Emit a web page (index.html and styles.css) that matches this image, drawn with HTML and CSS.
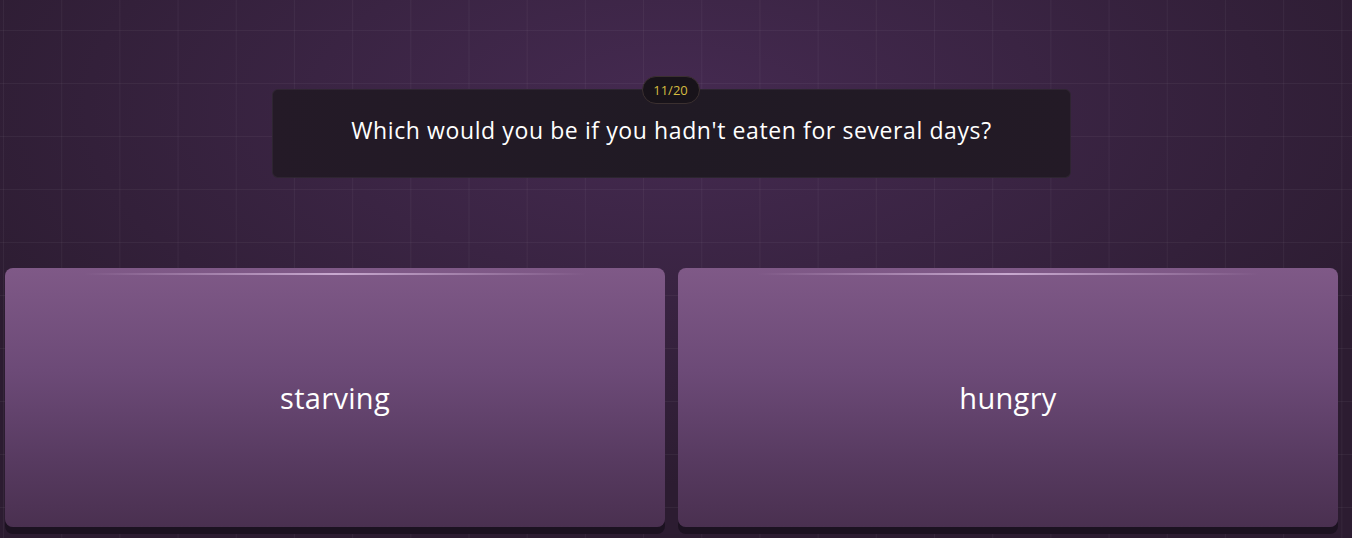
FILE: index.html
```html
<!DOCTYPE html>
<html lang="en">
<head>
<meta charset="UTF-8">
<meta name="viewport" content="width=device-width, initial-scale=1.0">
<title>Quiz</title>
<link rel="stylesheet" href="styles.css">
</head>
<body>

<div class="stage">
    <!-- Pertanyaan -->
    <div class="question-wrap">
        <div class="question">
            <span class="counter">11/20</span>
            <p class="question-text">Which would you be if you hadn't eaten for several days?</p>
        </div>
    </div>

    <!-- Pilihan jawaban -->
    <div class="answers">
        <button class="answer">starving</button>
        <button class="answer">hungry</button>
    </div>
</div>

</body>
</html>
```

FILE: styles.css
```css
/* Latar belakang dengan grid tipis */
html, body {
    margin: 0;
    height: 100%;
}
body {
    font-family: "Open Sans", "Noto Sans", sans-serif;
    color: #fff;
    overflow: hidden;
    background-color: #33213a;
    background-image:
        linear-gradient(rgba(255, 255, 255, 0.045) 1px, transparent 1px),
        linear-gradient(90deg, rgba(255, 255, 255, 0.045) 1px, transparent 1px),
        radial-gradient(ellipse 60% 70% at 50% 20%, #452a51 0%, #3a2443 45%, #2c1c31 100%);
    background-size: 58.2px 53px, 58.2px 53px, 100% 100%;
    background-position: 3px 30px, 3px 30px, 0 0;
}
.stage {
    height: 538px;
    padding: 89px 14px 0 5px;
    box-sizing: border-box;
    display: flex;
    flex-direction: column;
}
.question-wrap {
    display: flex;
    justify-content: center;
}
.question {
    position: relative;
    width: 799px;
    height: 89px;
    box-sizing: border-box;
    background: linear-gradient(90deg, #241a27, #201a24 50%, #231a26);
    border: 1px solid rgba(255, 255, 255, 0.05);
    border-radius: 6px;
    text-align: center;
}
.counter {
    position: absolute;
    top: -14px;
    left: 50%;
    transform: translateX(-50%);
    margin-left: -1px;
    width: 58px;
    height: 28px;
    box-sizing: border-box;
    line-height: 26px;
    font-size: 13px;
    color: #d6bb40;
    background: #18131a;
    border: 1px solid #3b3030;
    border-radius: 14px;
}
.question-text {
    margin: 0;
    padding-top: 25px;
    font-size: 23px;
    line-height: 30px;
    letter-spacing: 0.6px;
}
.answers {
    margin-top: 90px;
    display: grid;
    grid-template-columns: 1fr 1fr;
    gap: 13px;
}
.answer {
    position: relative;
    height: 259px;
    border: none;
    border-radius: 8px;
    background: linear-gradient(180deg, #7f5987 0%, #6c4a77 40%, #573a60 75%, #4a3050 100%);
    box-shadow: 0 7px 0 #1c1221;
    font-family: inherit;
    font-size: 29px;
    letter-spacing: 0.3px;
    color: #fff;
    cursor: pointer;
}
/* garis kilau di bagian atas kartu */
.answer::before {
    content: "";
    position: absolute;
    top: 5px;
    left: 12%;
    right: 12%;
    height: 2px;
    background: linear-gradient(90deg, transparent, #c8a9cf 50%, transparent);
}
```
